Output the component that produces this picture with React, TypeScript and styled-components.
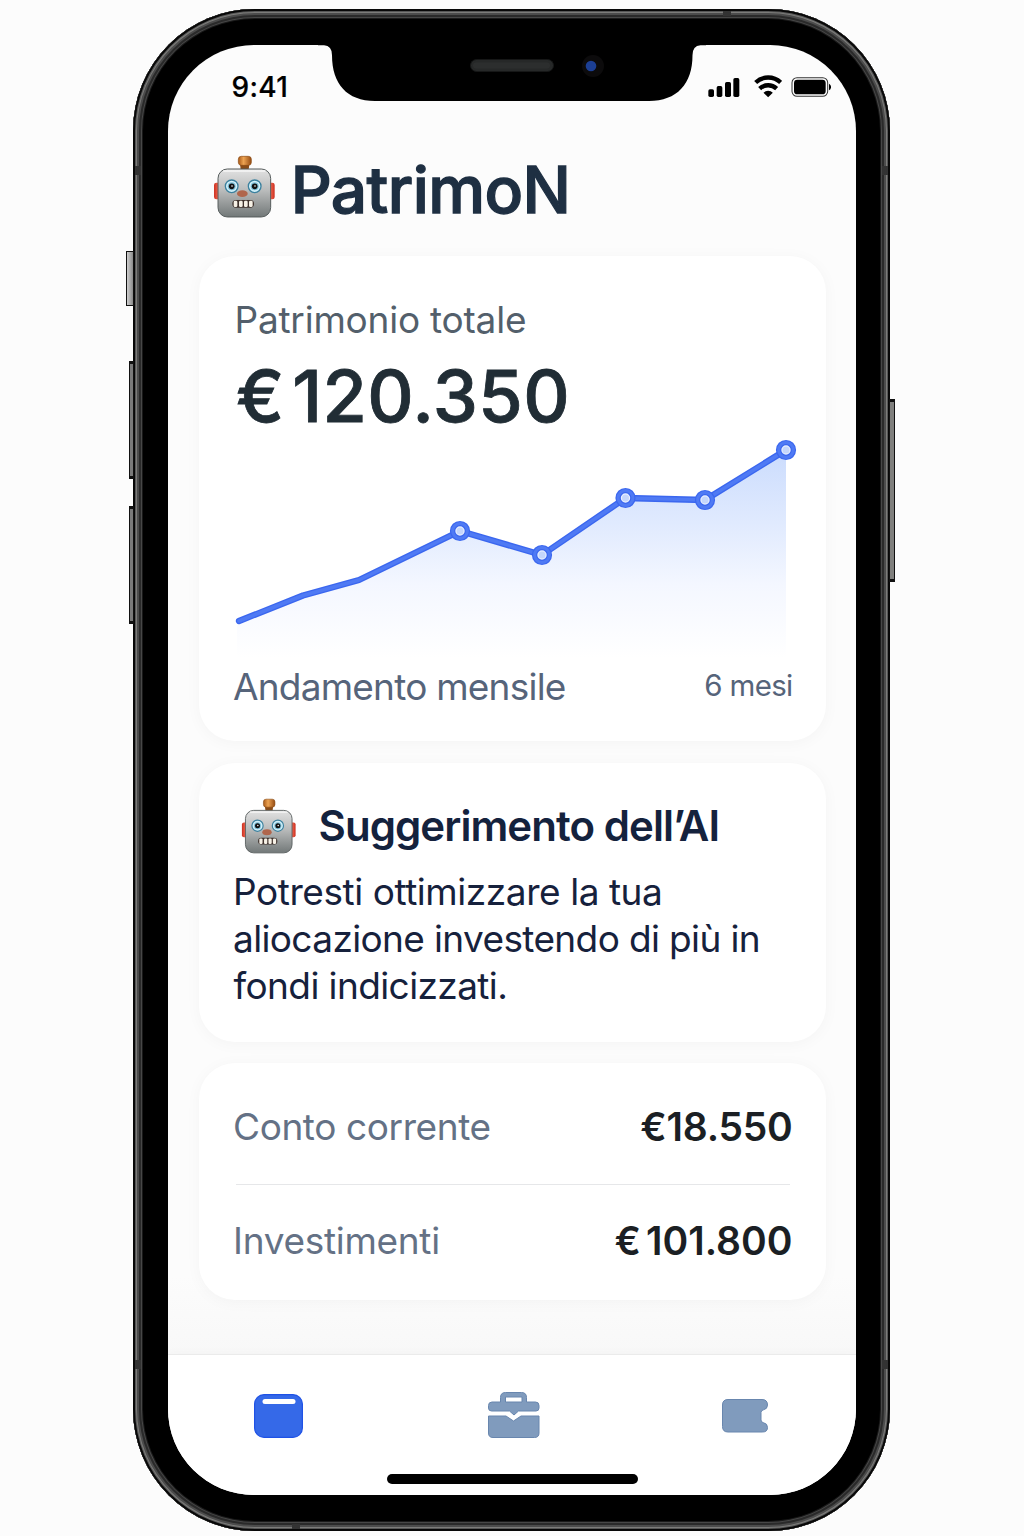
import React from "react";
import styled, { createGlobalStyle } from "styled-components";

const Global = createGlobalStyle`
  * { box-sizing: border-box; }
  body { margin: 0; background: #fcfcfc; font-family: Inter, "Liberation Sans", sans-serif; }
  svg { display: block; flex: none; }
`;

const Page = styled.main`
  width: 1024px;
  height: 1536px;
  overflow: hidden;
  padding: 9px 0 0 133px;
  background: #fcfcfc;
`;

/* Device */
const Phone = styled.div`
  position: relative;
  width: 757px;
  height: 1522px;
  padding: 36px 34px 36px 35px;
  border-radius: 122px;
  background: #000;
  box-shadow: inset 0 0 0 2px #080808, inset 0 0 0 3px #565656,
    inset 0 0 0 4px #7c7c7a, inset 0 0 0 6px #4c4c4c, inset 0 0 0 8px #2a2a2a,
    inset 0 0 0 9px #474747, inset 0 0 0 10px #1a1a1a;
`;

const SideButton = styled.span<{ $side: "left" | "right"; $top: number; $h: number; $w: number; $shade: string }>`
  position: absolute;
  top: ${p => p.$top}px;
  height: ${p => p.$h}px;
  width: ${p => p.$w}px;
  ${p => p.$side}: ${p => 1 - p.$w}px;
  background: ${p => p.$shade};
  border: solid #111;
  border-width: ${p => (p.$w > 6 ? 1 : 3)}px 1px;
`;

const Band = styled.span<{ $x: number; $y: number; $horizontal?: boolean }>`
  position: absolute;
  left: ${p => p.$x}px;
  top: ${p => p.$y}px;
  width: ${p => (p.$horizontal ? 8 : 6)}px;
  height: ${p => (p.$horizontal ? 5 : 9)}px;
  background: #333;
`;

const Screen = styled.div`
  width: 688px;
  height: 1450px;
  border-radius: 86px;
  overflow: hidden;
  background: linear-gradient(#fcfcfc 0, #fcfcfc 1230px, #f8f8f8 1309px);
  display: flex;
  flex-direction: column;
`;

/* Status bar */
const StatusBar = styled.header`
  height: 57px;
  flex: none;
  display: flex;
`;

const Time = styled.div`
  width: 150px;
  padding: 25px 0 0 63.5px;
  font-size: 28px;
  line-height: 34px;
  font-weight: 500;
  letter-spacing: 0.35px;
  -webkit-text-stroke: 0.2px #000;
  color: #000;
  white-space: nowrap;
`;

const StatusIcons = styled.div`
  display: flex;
  padding: 30px 0 0 2px;
  flex: 1;
`;

/* Content */
const Brand = styled.div`
  height: 154px;
  flex: none;
  display: flex;
  gap: 15px;
  padding: 53px 0 0 45px;
`;

const Title = styled.h1`
  margin: 0;
  font-size: 64px;
  line-height: 69px;
  font-weight: 500;
  letter-spacing: -0.6px;
  color: #1e2f42;
  -webkit-text-stroke: 1.3px #1e2f42;
`;

const Card = styled.section<{ $h: number; $gap?: number }>`
  flex: none;
  width: 627px;
  height: ${p => p.$h}px;
  margin: 0 0 ${p => p.$gap ?? 22}px 31px;
  padding: 0 27px 0 32px;
  border-radius: 36px;
  background: #fff;
  box-shadow: 0 2px 16px rgba(0, 0, 0, 0.035);
  display: flex;
  flex-direction: column;
`;

const Label = styled.span<{ $track?: number; $size?: number }>`
  font-size: ${p => p.$size ?? 37}px;
  line-height: 44px;
  font-weight: 400;
  letter-spacing: ${p => p.$track ?? 0}px;
  color: #56647a;
  white-space: nowrap;
`;

const TotalLabel = styled(Label)`
  margin: 42px 0 0 3.5px;
  color: #535f6b;
`;

const Total = styled.div`
  display: flex;
  gap: 7.5px;
  margin: 14px 0 0 5px;
  font-size: 72px;
  line-height: 80px;
  font-weight: 500;
  letter-spacing: 0.4px;
  color: #212d35;
  -webkit-text-stroke: 0.8px #212d35;
`;

const ChartFooter = styled.div`
  display: flex;
  justify-content: space-between;
  padding: 1px 6.5px 0 2px;
`;

const Period = styled(Label)`
  line-height: 40px;
`;

const TipHeader = styled.div`
  display: flex;
  gap: 22px;
  padding: 35px 0 0 10px;
`;

const TipTitle = styled.h2`
  margin: 0;
  font-size: 42px;
  line-height: 56px;
  font-weight: 600;
  letter-spacing: -0.93px;
  color: #14223d;
  white-space: nowrap;
`;

const TipText = styled.p`
  margin: 14px 0 0;
  font-size: 37px;
  line-height: 47px;
  font-weight: 400;
  color: #16213c;
`;

const TipLine = styled.span<{ $track: number; $x: number }>`
  display: block;
  padding-left: ${p => p.$x}px;
  letter-spacing: ${p => p.$track}px;
  white-space: nowrap;
`;

const AccountRow = styled.div<{ $h: number; $top?: number; $bottom?: number }>`
  display: flex;
  justify-content: space-between;
  align-items: center;
  height: ${p => p.$h}px;
  padding: ${p => p.$top ?? 0}px 6.5px ${p => p.$bottom ?? 0}px 2px;
`;

const AccountName = styled(Label)`
  color: #647185;
`;

const Amount = styled.span<{ $gap?: number; $track?: number }>`
  display: flex;
  gap: ${p => p.$gap ?? 0}px;
  font-size: 39px;
  line-height: 44px;
  font-weight: 600;
  letter-spacing: ${p => p.$track ?? 0}px;
  color: #1b1f24;
`;

const Divider = styled.div`
  height: 1px;
  margin: 0 9px 0 5px;
  background: #e6e7e9;
`;

/* Tabs */
const Tabs = styled.nav`
  margin-top: auto;
  height: 141px;
  flex: none;
  background: #fff;
  border-top: 1px solid #ebebeb;
  box-shadow: 0 -2px 10px rgba(0, 0, 0, 0.02);
`;

const TabRow = styled.div`
  display: flex;
  justify-content: space-between;
  padding: 37px 88px 0 86px;
`;

const HomeBar = styled.div`
  width: 251px;
  height: 10px;
  margin: 36px auto 0 219px;
  border-radius: 5px;
  background: #000;
`;

const Notch = () => (
  <svg width="388" height="57" viewBox="318 45 388 57">
    <path d="M318 44V45.3h6q8 .4 8 10C332 84 347 101 375 101H649C677 101 692.500 84 692.500 55.300q0-9.600 8-10h6V44Z" fill="#000" />
    <rect x="470.500" y="59.500" width="83" height="12" rx="6" fill="#262828" stroke="#161717" />
    <path d="M476 65.500h72" stroke="#353737" strokeWidth="6" strokeLinecap="round" strokeDasharray="1 1" opacity=".45" />
    <circle cx="593" cy="66" r="11" fill="#0c0b0c" />
    <circle cx="591" cy="66" r="5.300" fill="#1c3f94" />
  </svg>
);

const Signal = styled(({ className }: { className?: string }) => (
  <svg className={className} width="32" height="22.700" viewBox="806 225 96 68">
    <rect x="807" y="268" width="17" height="23" rx="5" />
    <rect x="832" y="258" width="17" height="33" rx="5" />
    <rect x="857" y="246" width="18" height="45" rx="5" />
    <rect x="882" y="234" width="18" height="57" rx="5" />
  </svg>
))`
  margin-right: 13.5px;
`;

const Wifi = styled(({ className }: { className?: string }) => (
  <svg className={className} width="28.300" height="22.700" viewBox="943 225 85 68" fill="none" stroke="#000" strokeWidth="13">
    <path d="M948 247.500a54 54 0 0 1 75 0" />
    <path d="M960 266a37 37 0 0 1 51 0" />
    <path d="M985.500 292l-14-14a20 20 0 0 1 28 0z" fill="#000" stroke="none" />
  </svg>
))`
  margin-right: 9px;
`;

const Battery = () => (
  <svg width="40.700" height="22.700" viewBox="1052 225 122 68">
    <rect x="1055" y="233" width="107" height="56" rx="15" fill="none" stroke="#333" strokeWidth="3" />
    <rect x="1061" y="239" width="95" height="44" rx="10" />
    <path d="M1166 251q6 3 6 10t-6 10z" />
  </svg>
);

const Robot = ({ size }: { size: number }) => (
  <svg width={size} height={size * 1.01} viewBox="40 29 188 190">
    <defs>
      <linearGradient id="robotHead" x1="0" y1="0" x2="0" y2="1">
        <stop offset="0" stopColor="#e2e2e2" />
        <stop offset=".45" stopColor="#b9bbbb" />
        <stop offset="1" stopColor="#727878" />
      </linearGradient>
      <linearGradient id="robotKnob">
        <stop offset="0" stopColor="#a95a18" />
        <stop offset=".4" stopColor="#eda352" />
        <stop offset="1" stopColor="#954b12" />
      </linearGradient>
      <linearGradient id="robotEar">
        <stop offset="0" stopColor="#c92f20" />
        <stop offset=".5" stopColor="#f4634c" />
        <stop offset="1" stopColor="#c92f20" />
      </linearGradient>
    </defs>
    <rect x="43" y="112" width="24" height="50" rx="7" fill="url(#robotEar)" />
    <rect x="201" y="112" width="24" height="50" rx="7" fill="url(#robotEar)" />
    <path d="M120 50h30l-3 22h-24z" fill="#8a4c18" />
    <rect x="116" y="33" width="39" height="27" rx="9" fill="url(#robotKnob)" stroke="#8a4a14" strokeWidth="2" />
    <rect x="55" y="71" width="158" height="144" rx="28" fill="url(#robotHead)" stroke="#565c5c" strokeWidth="3" />
    <path d="M72 77h124" stroke="#f6f6f6" strokeWidth="4" strokeLinecap="round" />
    {[96, 165].map(x => (
      <g key={x}>
        <circle cx={x} cy="123" r="19" fill="#d3f1fa" stroke="#3c819e" strokeWidth="4" />
        <circle cx={x} cy="123" r="12" fill="#7fc0d8" />
        <circle cx={x} cy="123" r="8.500" fill="#111" />
        <circle cx={x + 1} cy="122" r="2.500" fill="#fff" />
      </g>
    ))}
    <ellipse cx="128" cy="145" rx="16" ry="10" fill="#b0664c" />
    <rect x="98" y="164" width="65" height="23" rx="11" fill="#3f322d" />
    {[102, 118, 133, 148].map(x => (
      <rect key={x} x={x} y="166" width="11" height="19" rx="4" fill="#f6f1e6" />
    ))}
  </svg>
);

const line: [number, number][] = [
  [239, 621], [303, 595.5], [359, 580], [460, 531], [542, 555], [625.5, 498], [705, 500], [786, 450],
];
const points = line.map(p => p.join(",")).join(" ");

const Chart = () => (
  <svg width="568" height="228" viewBox="231 436 568 228">
    <defs>
      <linearGradient id="area" gradientUnits="userSpaceOnUse" x1="0" y1="450" x2="0" y2="658">
        <stop offset="0" stopColor="#cbdcfd" />
        <stop offset=".35" stopColor="#e0eafe" />
        <stop offset=".65" stopColor="#f4f7ff" />
        <stop offset="1" stopColor="#fff" />
      </linearGradient>
    </defs>
    <polygon points={`237,658 237,621 ${points} 786,658`} fill="url(#area)" />
    <polyline points={points} fill="none" stroke="#3b67ef" strokeWidth="6.300" strokeLinecap="round" strokeLinejoin="round" />
    <polyline points={points} fill="none" stroke="#4f7af4" strokeWidth="3.600" strokeLinecap="round" strokeLinejoin="round" />
    {line.slice(3).map(([x, y]) => (
      <g key={x}>
        <circle cx={x} cy={y} r="7.400" fill="#e9f0ff" stroke="#3b67ef" strokeWidth="5.400" />
        <circle cx={x} cy={y} r="7.400" fill="none" stroke="#4f7af4" strokeWidth="3" />
        <circle cx={x} cy={y} r="3.500" fill="#c5d6fb" />
      </g>
    ))}
  </svg>
);

const HomeTab = () => (
  <svg width="52" height="46" viewBox="254 1392 52 46">
    <rect x="254.600" y="1394.600" width="47.800" height="42.800" rx="9.500" fill="#3569e8" stroke="#1f52e6" strokeWidth="1.200" />
    <rect x="262.500" y="1399" width="33" height="5" rx="2.500" fill="#fff" />
  </svg>
);

const BriefcaseTab = () => (
  <svg width="52" height="46" viewBox="488 1392 52 46" fill="#809bbd" stroke="#6886ae" strokeWidth="1">
    <path fillRule="evenodd" d="M500.500 1402v-4.500q0-5 5-5h16q5 0 5 5v4.500h9q3.500 0 3.500 3.500v2.500q0 3-3 3h-17.500l-4.500 4-4.500-4h-18q-3 0-3-3v-2.500q0-3.500 3.500-3.500zm5 0h16.500v-5h-16.500z" />
    <path d="M488.500 1416h17.500l7.500 5 7.500-5h18v17q0 4.500-4.500 4.500h-41.500q-4.500 0-4.500-4.500z" />
  </svg>
);

const WalletTab = () => (
  <svg width="46" height="46" viewBox="722 1392 46 46">
    <path d="M728 1399.500h34q5.500 0 5.500 5.500 0 4-4 4.800-2.500.5-2.500 2.700v7.500q0 2.200 2.500 2.700 4 .8 4 4.800 0 4.500-5 4.500h-34.500q-5.500 0-5.500-5.500v-21.500q0-5.500 5.500-5.500z" fill="#809bbd" stroke="#6886ae" strokeWidth="1" />
  </svg>
);

export default function App() {
  return (
    <Page>
      <Global />
      <Phone>
        <SideButton $side="left" $top={242} $h={55} $w={8} $shade="linear-gradient(90deg,#cfcfcf,#8a8a8a)" />
        <SideButton $side="left" $top={352} $h={118} $w={5} $shade="#7a7a7a" />
        <SideButton $side="left" $top={497} $h={118} $w={5} $shade="#7a7a7a" />
        <SideButton $side="right" $top={390} $h={183} $w={6} $shade="#80807e" />
        <Band $x={2} $y={157} />
        <Band $x={749} $y={157} />
        <Band $x={2} $y={1351} />
        <Band $x={749} $y={1351} />
        <Band $x={590} $y={2} $horizontal />
        <Band $x={159} $y={1515} $horizontal />
        <Screen>
          <StatusBar>
            <Time>9:41</Time>
            <Notch />
            <StatusIcons>
              <Signal />
              <Wifi />
              <Battery />
            </StatusIcons>
          </StatusBar>
          <Brand>
            <Robot size={62.7} />
            <Title>PatrimoN</Title>
          </Brand>
          <Card $h={485}>
            <TotalLabel $track={-0.22}>Patrimonio totale</TotalLabel>
            <Total>
              <span>€</span>
              <span>120.350</span>
            </Total>
            <Chart />
            <ChartFooter>
              <Label $track={-0.78}>Andamento mensile</Label>
              <Period $size={29.5} $track={-0.7}>6 mesi</Period>
            </ChartFooter>
          </Card>
          <Card $h={279} $gap={21}>
            <TipHeader>
              <Robot size={55.5} />
              <TipTitle>Suggerimento dell’AI</TipTitle>
            </TipHeader>
            <TipText>
              <TipLine $x={2} $track={-0.44}>Potresti ottimizzare la tua</TipLine>
              <TipLine $x={2} $track={-0.63}>aliocazione investendo di più in</TipLine>
              <TipLine $x={2.5} $track={-0.6}>fondi indicizzati.</TipLine>
            </TipText>
          </Card>
          <Card $h={237} $gap={0}>
            <AccountRow $h={121} $top={6}>
              <AccountName $track={-0.4}>Conto corrente</AccountName>
              <Amount $track={-0.25}>
                <span>€</span>
                <span>18.550</span>
              </Amount>
            </AccountRow>
            <Divider />
            <AccountRow $h={111}>
              <AccountName $track={-0.3}>Investimenti</AccountName>
              <Amount $gap={5}>
                <span>€</span>
                <span>101.800</span>
              </Amount>
            </AccountRow>
          </Card>
          <Tabs>
            <TabRow>
              <HomeTab />
              <BriefcaseTab />
              <WalletTab />
            </TabRow>
            <HomeBar />
          </Tabs>
        </Screen>
      </Phone>
    </Page>
  );
}
